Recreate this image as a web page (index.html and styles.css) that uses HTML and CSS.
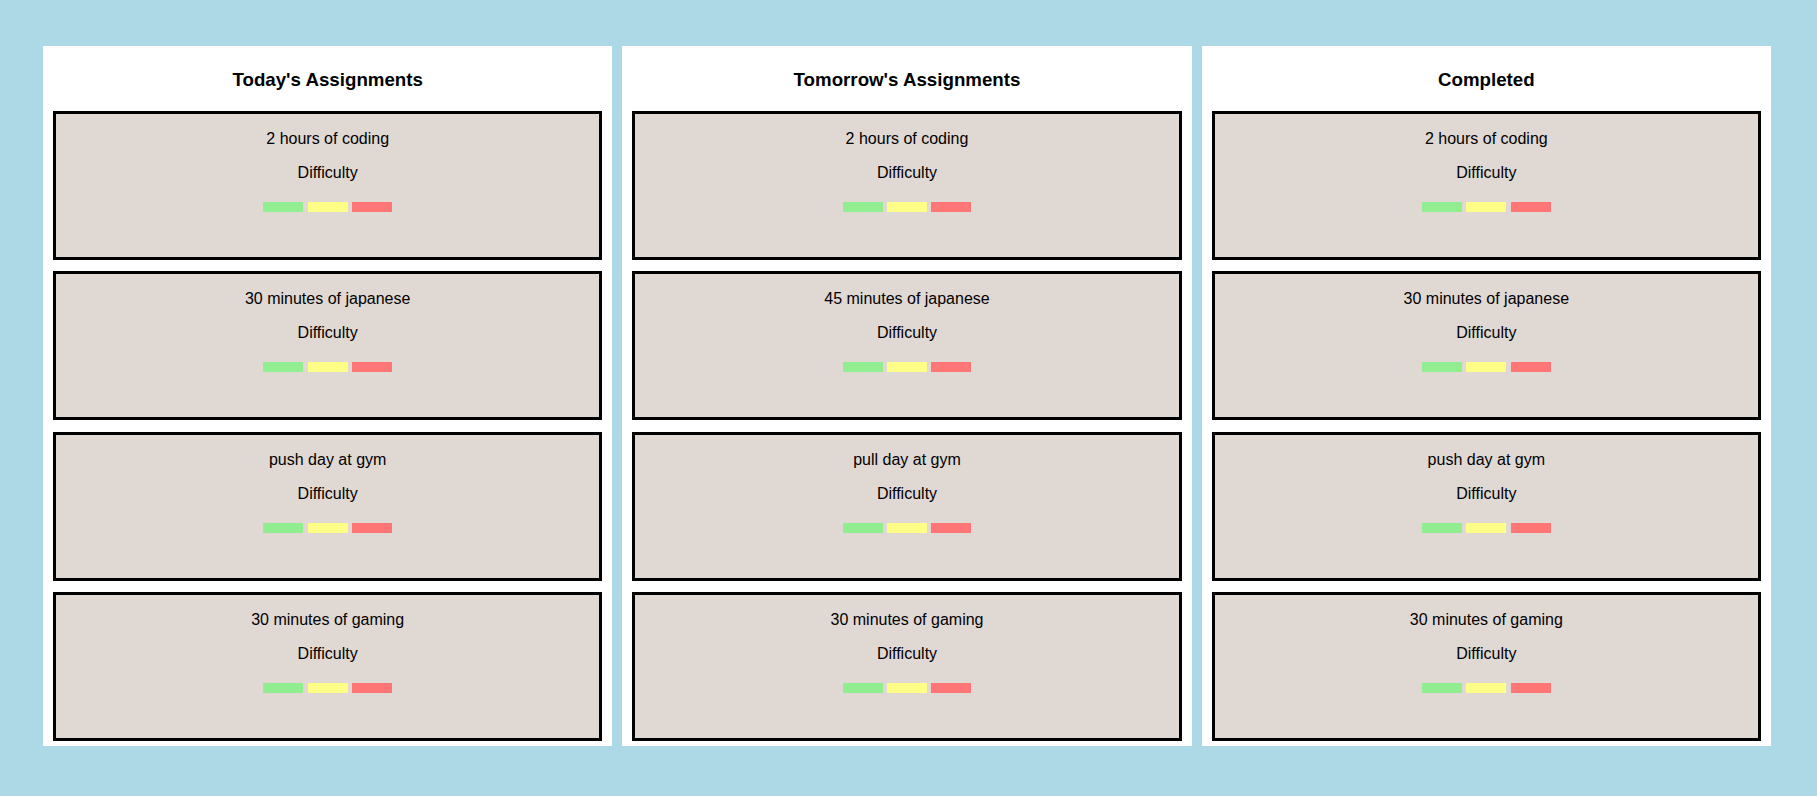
FILE: index.html
```html
<!DOCTYPE html>
<html lang="en">
<head>
<meta charset="utf-8">
<title>Assignments</title>
<link rel="stylesheet" href="styles.css">
</head>
<body>
<main class="board">
  <section class="column">
    <h3 class="column-title">Today's Assignments</h3>
    <div class="cards">
      <div class="card">
        <p class="task">2 hours of coding</p>
        <p class="label">Difficulty</p>
        <p class="levels"><span class="level easy"></span> <span class="level medium"></span> <span class="level hard"></span></p>
      </div>
      <div class="card">
        <p class="task">30 minutes of japanese</p>
        <p class="label">Difficulty</p>
        <p class="levels"><span class="level easy"></span> <span class="level medium"></span> <span class="level hard"></span></p>
      </div>
      <div class="card">
        <p class="task">push day at gym</p>
        <p class="label">Difficulty</p>
        <p class="levels"><span class="level easy"></span> <span class="level medium"></span> <span class="level hard"></span></p>
      </div>
      <div class="card">
        <p class="task">30 minutes of gaming</p>
        <p class="label">Difficulty</p>
        <p class="levels"><span class="level easy"></span> <span class="level medium"></span> <span class="level hard"></span></p>
      </div>
    </div>
  </section>
  <section class="column">
    <h3 class="column-title">Tomorrow's Assignments</h3>
    <div class="cards">
      <div class="card">
        <p class="task">2 hours of coding</p>
        <p class="label">Difficulty</p>
        <p class="levels"><span class="level easy"></span> <span class="level medium"></span> <span class="level hard"></span></p>
      </div>
      <div class="card">
        <p class="task">45 minutes of japanese</p>
        <p class="label">Difficulty</p>
        <p class="levels"><span class="level easy"></span> <span class="level medium"></span> <span class="level hard"></span></p>
      </div>
      <div class="card">
        <p class="task">pull day at gym</p>
        <p class="label">Difficulty</p>
        <p class="levels"><span class="level easy"></span> <span class="level medium"></span> <span class="level hard"></span></p>
      </div>
      <div class="card">
        <p class="task">30 minutes of gaming</p>
        <p class="label">Difficulty</p>
        <p class="levels"><span class="level easy"></span> <span class="level medium"></span> <span class="level hard"></span></p>
      </div>
    </div>
  </section>
  <section class="column">
    <h3 class="column-title">Completed</h3>
    <div class="cards">
      <div class="card">
        <p class="task">2 hours of coding</p>
        <p class="label">Difficulty</p>
        <p class="levels"><span class="level easy"></span> <span class="level medium"></span> <span class="level hard"></span></p>
      </div>
      <div class="card">
        <p class="task">30 minutes of japanese</p>
        <p class="label">Difficulty</p>
        <p class="levels"><span class="level easy"></span> <span class="level medium"></span> <span class="level hard"></span></p>
      </div>
      <div class="card">
        <p class="task">push day at gym</p>
        <p class="label">Difficulty</p>
        <p class="levels"><span class="level easy"></span> <span class="level medium"></span> <span class="level hard"></span></p>
      </div>
      <div class="card">
        <p class="task">30 minutes of gaming</p>
        <p class="label">Difficulty</p>
        <p class="levels"><span class="level easy"></span> <span class="level medium"></span> <span class="level hard"></span></p>
      </div>
    </div>
  </section>
</main>
</body>
</html>
```
FILE: styles.css
```css
html, body {
  margin: 0;
  padding: 0;
}

body {
  background: #add8e6;
  font-family: "Liberation Sans", Arial, sans-serif;
  color: #000;
  height: 796px;
  overflow: hidden;
}

.board {
  display: flex;
  gap: 10px;
  padding: 46px 46px 0 43px;
}

.column {
  flex: 1 1 0;
  min-width: 0;
  height: 700px;
  box-sizing: border-box;
  background: #fff;
  display: flex;
  flex-direction: column;
  padding: 0 10px 5px;
}

.column-title {
  margin: 0;
  height: 65px;
  box-sizing: border-box;
  padding-top: 2px;
  flex: none;
  display: flex;
  align-items: center;
  justify-content: center;
  font-size: 18.72px;
  font-weight: bold;
}

.cards {
  flex: 1;
  display: flex;
  flex-direction: column;
  justify-content: space-between;
}

.card {
  height: 149px;
  box-sizing: border-box;
  flex: none;
  border: 3px solid #000;
  background: #e0d8d3;
  text-align: center;
  font-size: 16px;
}

.card p {
  margin: 16px 0;
}

.level {
  display: inline-block;
  width: 40px;
  height: 10px;
}

.easy { background: #90ee90; }
.medium { background: #ffff88; }
.hard { background: #ff7676; }
```
